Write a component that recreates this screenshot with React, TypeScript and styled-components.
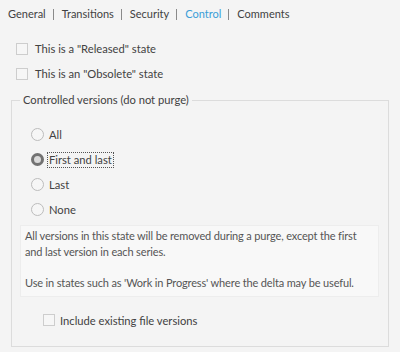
import React from "react";
import styled, { createGlobalStyle } from "styled-components";

const Global = createGlobalStyle`
  html, body { margin: 0; padding: 0; background: #f4f4f4; }
  body {
    font-family: Lato, "Noto Sans", sans-serif;
    font-size: 11.2px;
    color: #424242;
  }
`;

const Page = styled.div`
  width: 400px;
  height: 352px;
  display: flex;
  flex-direction: column;
  background: #f4f4f4;
  overflow: hidden;
`;

const TabBar = styled.div`
  display: flex;
  align-items: center;
  padding: 4px 0 0 8px;
  height: 20px;
  line-height: 16px;
  font-size: 11px;
`;

const Tab = styled.span<{ $active?: boolean }>`
  color: ${(p) => (p.$active ? "#3a9ed8" : "#424242")};
`;

const Sep = styled.span`
  display: inline-block;
  width: 1px;
  height: 11px;
  background: #8a8a8a;
  margin: 0 8px 0 7px;
`;

const TopOptions = styled.div`
  display: flex;
  flex-direction: column;
  padding: 12px 0 0 16px;
`;

const Row = styled.label<{ $gap?: number; $h?: number }>`
  display: flex;
  align-items: center;
  height: ${(p) => p.$h ?? 25}px;
  gap: ${(p) => p.$gap ?? 7}px;
`;

const Box = styled.span`
  width: 10px;
  height: 10px;
  border: 1px solid #cdcdcd;
  background: #f6f6f6;
  flex: none;
`;

const Group = styled.fieldset`
  margin: 6px 11px 0 11px;
  padding: 0 9px 16px 8px;
  border: 1px solid #dcdcdc;
  min-width: 0;
`;

const Legend = styled.legend`
  padding: 0 3px;
  line-height: 16px;
`;

const Radios = styled.div`
  display: flex;
  flex-direction: column;
  padding: 14px 0 0 11px;
`;

const Radio = styled.span<{ $checked?: boolean }>`
  box-sizing: border-box;
  width: 13px;
  height: 13px;
  border-radius: 50%;
  flex: none;
  border: ${(p) => (p.$checked ? "3px solid #727272" : "1px solid #bcbcbc")};
  background: ${(p) => (p.$checked ? "#dadada" : "#f6f6f6")};
`;

const RadioText = styled.span<{ $focus?: boolean }>`
  padding: 0 1px;
  line-height: 14px;
  border: 1px dotted ${(p) => (p.$focus ? "#555" : "transparent")};
`;

const Info = styled.div`
  box-sizing: border-box;
  height: 72px;
  margin-top: 3px;
  padding: 2px 4px;
  background: #f8f8f8;
  border: 1px solid #ededed;
  line-height: 15.5px;
  font-size: 11px;
  letter-spacing: -0.15px;
  color: #555;
`;

const Para = styled.p`
  margin: 0 0 15.5px 0;
  &:last-child { margin-bottom: 0; }
`;

const Include = styled.div`
  padding: 13px 0 0 23px;
`;

const tabs = ["General", "Transitions", "Security", "Control", "Comments"];
const radios = ["All", "First and last", "Last", "None"];

export default function App() {
  return (
    <Page>
      <Global />
      <TabBar>
        {tabs.map((t, i) => (
          <React.Fragment key={t}>
            {i > 0 && <Sep />}
            <Tab $active={t === "Control"}>{t}</Tab>
          </React.Fragment>
        ))}
      </TabBar>
      <TopOptions>
        <Row><Box />This is a "Released" state</Row>
        <Row><Box />This is an "Obsolete" state</Row>
      </TopOptions>
      <Group>
        <Legend>Controlled versions (do not purge)</Legend>
        <Radios>
          {radios.map((r) => (
            <Row key={r} $gap={3}>
              <Radio $checked={r === "First and last"} />
              <RadioText $focus={r === "First and last"}>{r}</RadioText>
            </Row>
          ))}
        </Radios>
        <Info>
          <Para>All versions in this state will be removed during a purge, except the first and last version in each series.</Para>
          <Para>Use in states such as 'Work in Progress' where the delta may be useful.</Para>
        </Info>
        <Include>
          <Row $h={20} $gap={5}><Box />Include existing file versions</Row>
        </Include>
      </Group>
    </Page>
  );
}
